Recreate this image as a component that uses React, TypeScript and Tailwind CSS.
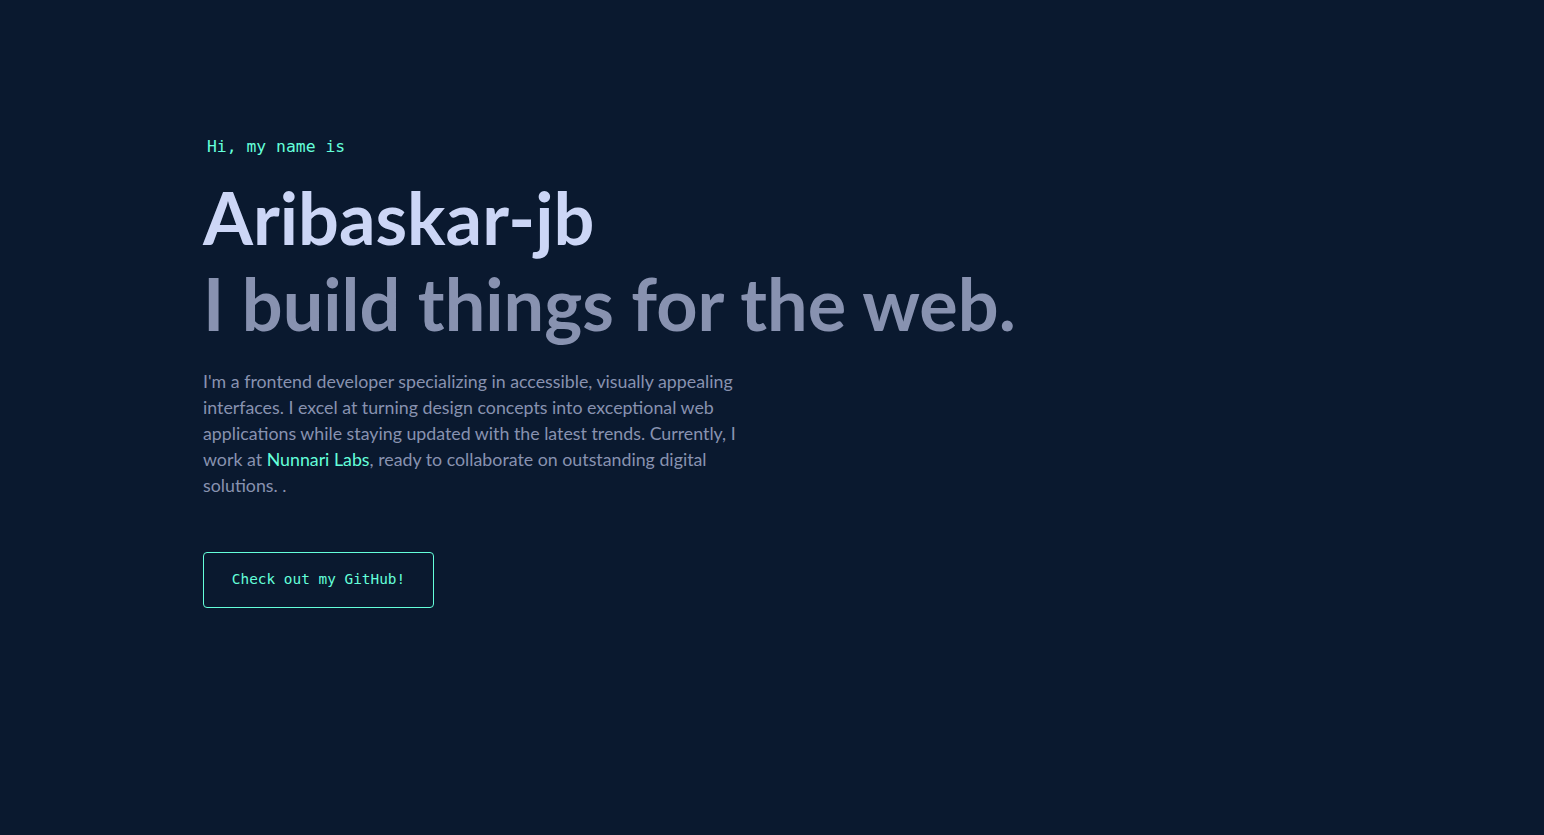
export default function App() {
  return (
    <div className="min-h-screen w-full bg-[#0a192f]">
      <section className="flex flex-col items-start pl-[203px] pt-[134px]">
        <h1
          className="ml-1 text-[16.4px] leading-[26px] text-[#64ffda]"
          style={{ fontFamily: '"DejaVu Sans Mono", monospace' }}
        >
          Hi, my name is
        </h1>
        <div style={{ fontFamily: 'Lato, "Noto Sans", sans-serif' }}>
          <h2 className="mt-[14px] text-[72px] font-bold leading-[86px] text-[#ccd6f6]">
            Aribaskar-jb
          </h2>
          <h3 className="text-[72px] font-bold leading-[86px] text-[#8892b0]">
            I build things for the web.
          </h3>
          <p className="mt-[22px] max-w-[540px] text-[17.8px] leading-[26px] text-[#8892b0]">
            I'm a frontend developer specializing in accessible, visually
            appealing interfaces. I excel at turning design concepts into
            exceptional web applications while staying updated with the latest
            trends. Currently, I work at{" "}
            <a href="#" className="text-[#64ffda]">
              Nunnari Labs
            </a>
            , ready to collaborate on outstanding digital solutions. .
          </p>
        </div>
        <a
          href="#"
          className="mt-[54px] flex h-[56px] w-[231px] items-center justify-center rounded-[4px] border border-[#64ffda] text-[14.4px] text-[#64ffda]"
          style={{ fontFamily: '"DejaVu Sans Mono", monospace' }}
        >
          Check out my GitHub!
        </a>
      </section>
    </div>
  );
}
